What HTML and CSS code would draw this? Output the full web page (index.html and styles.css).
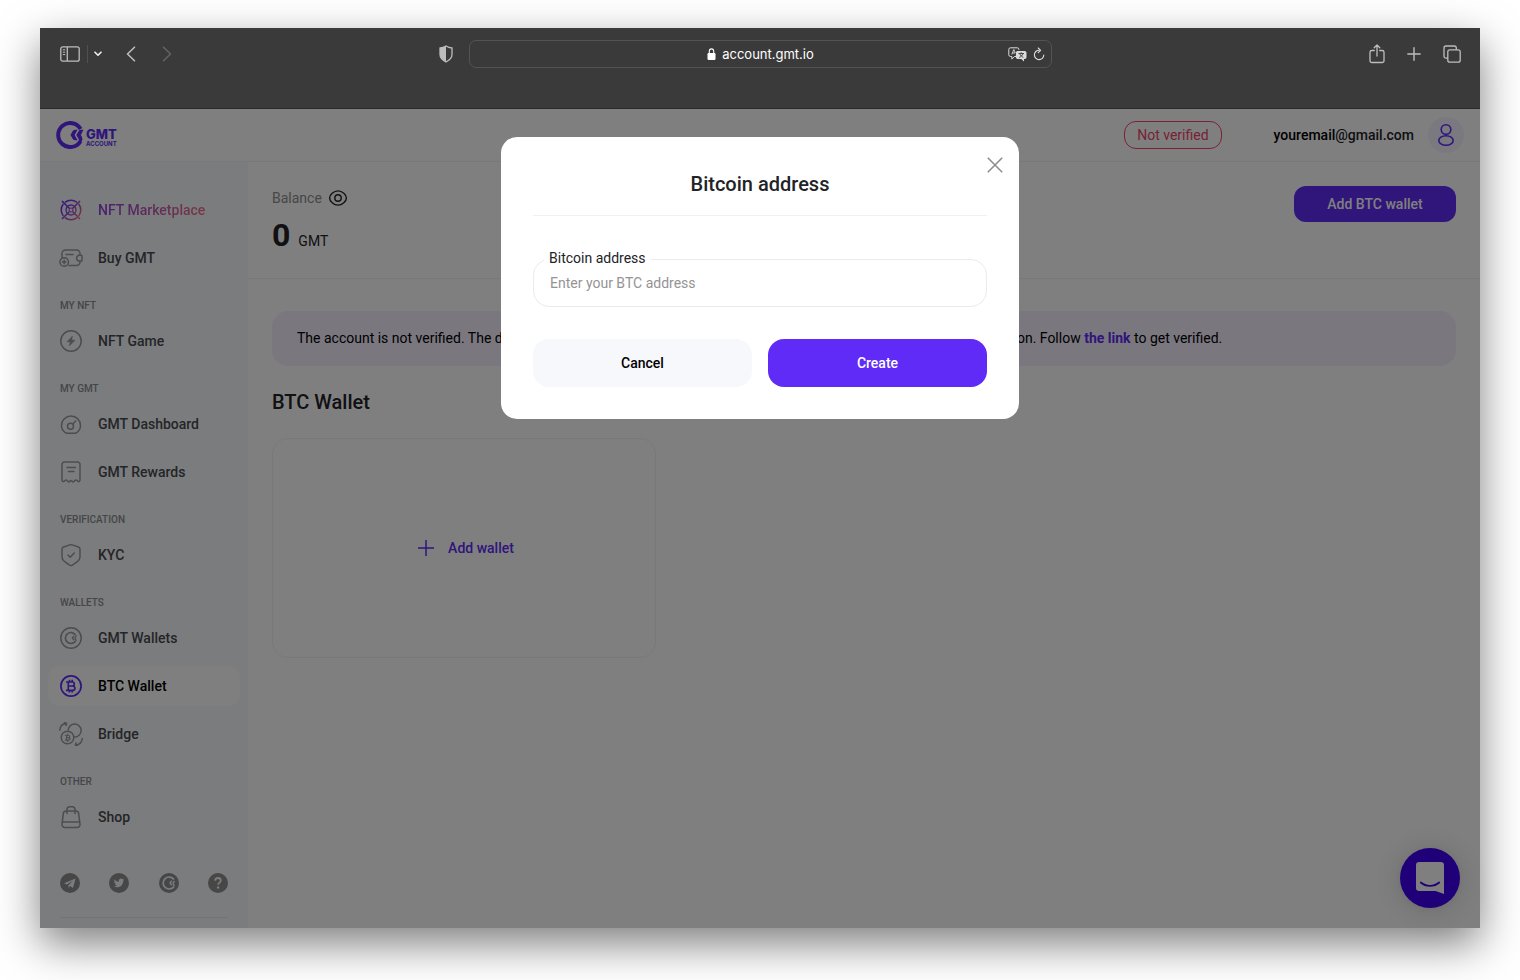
FILE: index.html
```html
<!DOCTYPE html>
<html lang="en">
<head>
  <meta charset="UTF-8" />
  <meta name="viewport" content="width=device-width, initial-scale=1.0"/>
  <title>GMT Account</title>
  <link rel="stylesheet" href="styles.css">
</head>
<body>
  <div class="window">
    <div class="toolbar">
      <div class="toolbar-left">
        <button type="button" aria-label="Sidebar">
          <svg width="20" height="16" viewBox="0 0 20 16" fill="none" stroke="currentColor" stroke-width="1.3"><rect x="0.8" y="0.8" width="18.4" height="14.4" rx="2"/><path d="M7.3 1v14"/><path d="M2.8 3.8h2.4M2.8 6.2h2.4M2.8 8.6h2.4" stroke-width="1"/></svg>
        </button>
        <span class="divider"></span>
        <button type="button" class="tab-menu" aria-label="Tab groups">
          <svg width="8" height="6" viewBox="0 0 8 6" fill="none" stroke="currentColor" stroke-width="1.6" stroke-linecap="round" stroke-linejoin="round"><path d="M1 1.2l3 3 3-3"/></svg>
        </button>
        <button type="button" class="back" aria-label="Back">
          <svg width="10" height="16" viewBox="0 0 10 16" fill="none" stroke="currentColor" stroke-width="1.6" stroke-linecap="round" stroke-linejoin="round"><path d="M8.5 1.2L1.5 8l7 6.8"/></svg>
        </button>
        <button type="button" class="forward" aria-label="Forward">
          <svg width="10" height="16" viewBox="0 0 10 16" fill="none" stroke="currentColor" stroke-width="1.6" stroke-linecap="round" stroke-linejoin="round"><path d="M1.5 1.2l7 6.8-7 6.8"/></svg>
        </button>
      </div>
      <div class="toolbar-center">
        <button type="button" aria-label="Privacy report">
          <svg width="14" height="18" viewBox="0 0 14 18"><path d="M7 1c2 1.300 4 1.900 6 2v6.500c0 3.300-2.600 5.700-6 7.500-3.400-1.800-6-4.200-6-7.500V3c2-.1 4-.7 6-2z" fill="none" stroke="currentColor" stroke-width="1.3"/><path d="M7 1v16C3.600 15.200 1 12.800 1 9.500V3c2-.1 4-.7 6-2z" fill="currentColor"/></svg>
        </button>
        <div class="address">
          <span class="address-text">
            <svg width="9" height="12" viewBox="0 0 9 12"><rect x="0.500" y="5" width="8" height="7" rx="1.200" fill="currentColor"/><path d="M2.300 5.500V3.300a2.200 2.400 0 0 1 4.400 0v2.200" fill="none" stroke="currentColor" stroke-width="1.100"/></svg>
            account.gmt.io
          </span>
          <span class="address-icons">
            <svg width="19" height="15" viewBox="0 0 19 15" fill="none" stroke="currentColor"><path d="M8 9.500H6.500L3.800 12V9.500H2.500A1.700 1.700 0 0 1 .8 7.800V2.500A1.700 1.700 0 0 1 2.500.8h6.700a1.700 1.700 0 0 1 1.700 1.700V3"/><path d="M3.800 7.500l2-5 1.500 3.500M4.500 6h2.500" stroke-width="0.900"/><path d="M9.700 4h7a1.800 1.800 0 0 1 1.800 1.800v4.400a1.800 1.800 0 0 1-1.800 1.800H16v2.500L13.300 12H9.700a1.800 1.800 0 0 1-1.800-1.800V5.800A1.800 1.800 0 0 1 9.700 4z" fill="currentColor" stroke="none"/><path d="M10.500 6.500h5.500M13.200 5.300v1.200M15 6.500c-.6 2-2 3.200-3.800 4M11.800 6.800c.7 1.700 2 3 3.600 3.600" stroke="#3a3a3a" stroke-width="0.900"/></svg>
            <svg width="12" height="14" viewBox="0 0 12 14" fill="none" stroke="currentColor" stroke-width="1.100" stroke-linecap="round" stroke-linejoin="round"><path d="M6.200 3.200A4.700 4.700 0 1 0 10.800 8"/><path d="M5.200 1l2.400 2.300-2.400 2.400"/></svg>
          </span>
        </div>
      </div>
      <div class="toolbar-right">
        <button type="button" aria-label="Share">
          <svg width="16" height="20" viewBox="0 0 16 20" fill="none" stroke="currentColor" stroke-width="1.300" stroke-linecap="round" stroke-linejoin="round"><path d="M5.300 6.500H2.800A1.800 1.800 0 0 0 1 8.300v8.400a1.800 1.800 0 0 0 1.800 1.800h10.400a1.800 1.800 0 0 0 1.800-1.800V8.300a1.800 1.800 0 0 0-1.800-1.800h-2.500M8 12V1.200M5.200 3.800L8 1l2.800 2.800"/></svg>
        </button>
        <button type="button" aria-label="New tab">
          <svg width="14" height="14" viewBox="0 0 14 14" fill="none" stroke="currentColor" stroke-width="1.400" stroke-linecap="round"><path d="M7 .8v12.400M.8 7h12.400"/></svg>
        </button>
        <button type="button" aria-label="All tabs">
          <svg width="18" height="18" viewBox="0 0 18 18" fill="none" stroke="currentColor" stroke-width="1.300"><rect x="4.800" y="4.800" width="12.400" height="12.400" rx="2"/><path d="M4.800 13.200H3a2 2 0 0 1-2-2V3a2 2 0 0 1 2-2h8.300a2 2 0 0 1 2 2v1.800"/></svg>
        </button>
      </div>
    </div>

    <div class="app">
      <header class="header">
        <a href="#" class="logo" aria-label="GMT Account">
          <svg width="28" height="28" viewBox="0 0 28 28" fill="none"><path d="M24.600 8A12 12 0 1 0 24.500 20.200" stroke="currentColor" stroke-width="4"/><path d="M19.300 8.800h2.300l-3 5.200 3 5.200h-2.300c-1.800 0-2.300-.8-3-2L14.500 14l1.800-3.200c.7-1.200 1.200-2 3-2z" fill="currentColor"/><path d="M24.300 8.800h3.200L24.800 14c1.500 2 2.200 4.200 1 6.500l-3.200 1.200c.8-1.600.5-3-.4-4.500L20.300 14l2-3.200c.7-1.200 1.200-2 2-2z" fill="currentColor"/></svg>
          <span class="logo-text"><b>GMT</b><small>ACCOUNT</small></span>
        </a>
        <div class="user">
          <span class="status">Not verified</span>
          <span class="email"><span class="email-name">youremail</span>@gmail.com</span>
          <button type="button" class="avatar" aria-label="Profile">
            <svg width="18" height="24" viewBox="0 0 18 24" fill="none" stroke="currentColor" stroke-width="1.600"><circle cx="9" cy="6.500" r="4.800"/><ellipse cx="9" cy="17.500" rx="7.200" ry="4.700"/></svg>
          </button>
        </div>
      </header>

      <div class="layout">
        <nav class="sidebar">
          <a href="#" class="nav-item marketplace">
            <svg width="24" height="24" viewBox="0 0 24 24" fill="none" stroke="url(#brand)" stroke-width="1.500"><defs><linearGradient id="brand" x1="2" y1="4" x2="22" y2="20" gradientUnits="userSpaceOnUse"><stop stop-color="#602bf7"/><stop offset="0.450" stop-color="#8b42dc"/><stop offset="1" stop-color="#f0718c"/></linearGradient></defs><path d="M6 4.300a9.800 9.800 0 0 1 12 0M19.700 6a9.800 9.800 0 0 1 0 12M18 19.700a9.800 9.800 0 0 1-12 0M4.300 18a9.800 9.800 0 0 1 0-12"/><circle cx="12" cy="12" r="5" stroke-width="1.300"/><circle cx="12" cy="12" r="2" stroke-width="1"/><path d="M3 3l7.500 7.500M13.500 13.500L21 21M21 3l-7.500 7.500M10.500 13.500L3 21"/></svg>
            <span>NFT Marketplace</span>
          </a>
          <a href="#" class="nav-item">
            <svg width="24" height="24" viewBox="0 0 24 24" fill="none" stroke="currentColor" stroke-width="1.500" stroke-linecap="round"><path d="M3 12V7.500A3.500 3.500 0 0 1 6.500 4h11A3.500 3.500 0 0 1 21 7.500v1.700M21 15v1a3.500 3.500 0 0 1-3.500 3.500H10"/><path d="M22.200 9.300H20a2.900 2.900 0 0 0 0 5.700h2.200a.8.800 0 0 0 .8-.8v-4a.8.800 0 0 0-.8-.9zM7 8.500h7"/><circle cx="5.200" cy="16" r="4.300"/><path d="M5.200 14.200v3.600M3.400 16H7"/></svg>
            <span>Buy GMT</span>
          </a>
          <h2 class="nav-title">MY NFT</h2>
          <a href="#" class="nav-item">
            <svg width="24" height="24" viewBox="0 0 24 24" fill="none" stroke="currentColor" stroke-width="1.500"><circle cx="12" cy="12" r="10.200"/><path d="M13.500 7L8 12.800l3.200.3-.9 4L16 11.300l-3.300-.4z" fill="currentColor" stroke-width="0.500"/></svg>
            <span>NFT Game</span>
          </a>
          <h2 class="nav-title">MY GMT</h2>
          <a href="#" class="nav-item">
            <svg width="24" height="24" viewBox="0 0 24 24" fill="none" stroke="currentColor" stroke-width="1.500" stroke-linecap="round"><path d="M7.200 21.200C4.300 19.600 2.500 16.800 2.500 13.500a9.500 9.500 0 0 1 19 0c0 3.300-1.800 6.100-4.700 7.700z" stroke-linejoin="round"/><circle cx="11.500" cy="14.200" r="3"/><path d="M13.700 12l3-3"/></svg>
            <span>GMT Dashboard</span>
          </a>
          <a href="#" class="nav-item">
            <svg width="24" height="24" viewBox="0 0 24 24" fill="none" stroke="currentColor" stroke-width="1.500" stroke-linecap="round" stroke-linejoin="round"><path d="M3 20V4.500A2.500 2.500 0 0 1 5.500 2h13A2.500 2.500 0 0 1 21 4.500V20c0 1.600-1.300 2-2.200 1.200l-1-.9c-.6-.5-1.200-.5-1.700 0l-1.300 1.300c-.4.500-1 .5-1.400 0l-.6-.6c-.5-.5-1.100-.5-1.600 0l-.6.6c-.4.500-1 .5-1.400 0L7.900 20.300c-.5-.5-1.100-.5-1.700 0l-1 .9C4.300 22 3 21.600 3 20z"/><path d="M8 7.500h8.500M9.500 11.500H15"/></svg>
            <span>GMT Rewards</span>
          </a>
          <h2 class="nav-title">VERIFICATION</h2>
          <a href="#" class="nav-item">
            <svg width="24" height="24" viewBox="0 0 24 24" fill="none" stroke="currentColor" stroke-width="1.500" stroke-linecap="round" stroke-linejoin="round"><path d="M10.800 1.900L4.600 4A2.300 2.300 0 0 0 3 6.200V14c0 1.800 1 3.200 2.300 4.300l5.300 3.800c.9.600 1.900.6 2.800 0l5.300-3.800C20 17.200 21 15.800 21 14V6.200A2.300 2.300 0 0 0 19.400 4l-6.200-2.100a3.700 3.700 0 0 0-2.400 0z"/><path d="M9 12l2.200 2.200 4-4.200"/></svg>
            <span>KYC</span>
          </a>
          <h2 class="nav-title">WALLETS</h2>
          <a href="#" class="nav-item">
            <svg width="24" height="24" viewBox="0 0 24 24" fill="none" stroke="currentColor" stroke-width="1.500"><circle cx="12" cy="12" r="10.200"/><path d="M16.500 9A5.500 5.500 0 1 0 16.500 15" stroke-width="1.700"/><path d="M15 9.800l-1.600 2.200 1.600 2.200M17.500 9.500L16 12l1.200 3" stroke-width="1.300"/></svg>
            <span>GMT Wallets</span>
          </a>
          <a href="#" class="nav-item active">
            <svg width="24" height="24" viewBox="0 0 24 24" fill="none" stroke="currentColor" stroke-width="1.700"><circle cx="12" cy="12" r="10.100"/><path d="M7 8h6.300a2 2 0 0 1 0 4H9.500h4.200a2.200 2.200 0 0 1 0 4.400H7M9.300 8v8.400M10.500 5.800V8M13.200 5.800V8M10.500 16.400v2.200M13.200 16.400v2.200"/></svg>
            <span>BTC Wallet</span>
          </a>
          <a href="#" class="nav-item">
            <svg width="24" height="24" viewBox="0 0 24 24" fill="none" stroke="currentColor" stroke-width="1.500" stroke-linecap="round" stroke-linejoin="round"><circle cx="8.500" cy="15.500" r="6.300"/><path d="M9.200 8A6.500 6.500 0 1 1 15.500 15M.8 8.200C1 4.500 3.500 1.700 7.500 1.200M5.500.8l2.200.4-.7 2.200M23.200 16.500c-.2 3.700-2.900 6.200-6.700 6.600M18.500 23.600l-2.200-.5.700-2.200"/><path d="M6.300 13.300h3.200a1.100 1.100 0 0 1 0 2.300H7.500h2.300a1.200 1.200 0 0 1 0 2.500H6.300M7.500 13.300v4.800M8.700 12v1.300M8.700 18.100v1.300" stroke-width="1.100"/></svg>
            <span>Bridge</span>
          </a>
          <h2 class="nav-title">OTHER</h2>
          <a href="#" class="nav-item">
            <svg width="24" height="24" viewBox="0 0 24 24" fill="none" stroke="currentColor" stroke-width="1.500" stroke-linecap="round"><path d="M7.300 6h9.400a3 3 0 0 1 3 2.600l1.300 10.700A2.900 2.900 0 0 1 18.100 22.500H5.900A2.900 2.900 0 0 1 3 19.300L4.300 8.600a3 3 0 0 1 3-2.600zM3.400 17h17.200"/><path d="M8 8.500V4.500A2.800 2.800 0 0 1 10.800 1.700h2.400A2.800 2.800 0 0 1 16 4.500v4"/></svg>
            <span>Shop</span>
          </a>
          <div class="socials">
            <a href="#" aria-label="Telegram"><svg width="20" height="20" viewBox="0 0 20 20"><circle cx="10" cy="10" r="10" fill="currentColor"/><path d="M15.500 5.500L4 10.200l3 1.200 6-4-4.500 4.800v2.600l1.700-1.800 2.800 2z" fill="#f7f8fb"/></svg></a>
            <a href="#" aria-label="Twitter"><svg width="20" height="20" viewBox="0 0 20 20"><circle cx="10" cy="10" r="10" fill="currentColor"/><path d="M5.200 6.200c1.200 1.400 2.900 2.300 4.700 2.400-.4-2 .9-3 2.100-3 .6 0 1.200.3 1.600.7.500-.1.900-.3 1.300-.5-.1.500-.5.900-.9 1.200.4 0 .8-.2 1.200-.3-.3.400-.6.800-1 1 .2 3.700-2.700 6.600-6 6.600-1.300 0-2.500-.4-3.400-1 1.200.1 2.300-.2 3.200-.9-1 0-1.700-.7-2-1.500h1c-1.100-.2-1.800-1-1.800-2.100.3.200.6.200 1 .2-1-.7-1.400-1.800-1-2.800z" fill="#f7f8fb"/></svg></a>
            <a href="#" aria-label="GMT"><svg width="20" height="20" viewBox="0 0 20 20"><circle cx="10" cy="10" r="10" fill="currentColor"/><path d="M15 6.500A6 6 0 1 0 15 13.500" fill="none" stroke="#f7f8fb" stroke-width="1.700"/><path d="M12.700 7.800L11 10l1.700 2.200M15.500 7.800L14 10l1.300 3.300" fill="none" stroke="#f7f8fb" stroke-width="1.400"/></svg></a>
            <a href="#" aria-label="Help"><svg width="20" height="20" viewBox="0 0 20 20"><circle cx="10" cy="10" r="10" fill="currentColor"/><path d="M7.200 7.700C7.200 6 8.400 5 10 5s2.800 1 2.800 2.500c0 2-2.700 2.200-2.700 4.300" fill="none" stroke="#f7f8fb" stroke-width="1.800"/><circle cx="10.100" cy="14.500" r="1.200" fill="#f7f8fb"/></svg></a>
          </div>
        </nav>

        <main class="main">
          <section class="balance">
            <div>
              <div class="balance-label">
                Balance
                <svg width="20" height="16" viewBox="0 0 20 16" fill="none" stroke="currentColor" stroke-width="1.400"><path d="M10 .9c4.300 0 8.400 4 8.400 7.100s-4.100 7.100-8.400 7.100S1.600 11.100 1.600 8 5.700.9 10 .9z"/><circle cx="10" cy="8" r="3.200"/></svg>
              </div>
              <div class="balance-value"><strong>0</strong><span>GMT</span></div>
            </div>
            <button type="button" class="add-button">Add BTC wallet</button>
          </section>

          <section class="content">
            <p class="alert">The account is not verified. The deposit and withdrawal of funds are limited until the account owner passes verification. Follow <a href="#">the link</a> to get verified.</p>
            <h1>BTC Wallet</h1>
            <button type="button" class="wallet-card">
              <svg width="16" height="16" viewBox="0 0 16 16" fill="none" stroke="currentColor" stroke-width="1.500"><path d="M8 0v16M0 8h16"/></svg>
              Add wallet
            </button>
          </section>
        </main>
      </div>

      <button type="button" class="chat" aria-label="Chat">
        <svg width="28" height="32" viewBox="0 0 28 32"><path d="M28 32s-4.700-1.800-8.400-3H3.200A3.200 3.200 0 0 1 0 25.800V3.200A3.200 3.200 0 0 1 3.200 0h21.600A3.200 3.200 0 0 1 28 3.200z" fill="#fff"/><path d="M4.800 20.500c5 4.400 13.400 4.400 18.400 0" fill="none" stroke="#4000f0" stroke-width="1.800" stroke-linecap="round"/></svg>
      </button>

      <div class="overlay">
        <form class="modal" role="dialog" aria-labelledby="modal-title">
          <button type="button" class="close" aria-label="Close">
            <svg width="16" height="16" viewBox="0 0 16 16" fill="none" stroke="currentColor" stroke-width="1.600"><path d="M.8.8l14.400 14.400M15.200.8L.8 15.200"/></svg>
          </button>
          <h2 id="modal-title">Bitcoin address</h2>
          <div class="field">
            <label for="address">Bitcoin address</label>
            <input type="text" id="address" placeholder="Enter your BTC address">
          </div>
          <div class="modal-buttons">
            <button type="button" class="cancel">Cancel</button>
            <button type="submit" class="create">Create</button>
          </div>
        </form>
      </div>
    </div>
  </div>
</body>
</html>
```
FILE: styles.css
```css
*, *::before, *::after {
  box-sizing: border-box;
}

body {
  margin: 0;
  min-height: 100vh;
  padding: 28px 40px 52px;
  display: flex;
  background-color: #ffffff;
  font-family: Roboto, "Liberation Sans", sans-serif;
  font-size: 14px;
  line-height: 20px;
  color: #222327;
}

button,
input {
  font-family: inherit;
  font-size: 14px;
}

button {
  padding: 0;
  border: none;
  background: none;
  color: inherit;
  cursor: pointer;
}

a {
  color: inherit;
  text-decoration: none;
}

svg {
  display: block;
  flex-shrink: 0;
}

h1, h2, p {
  margin: 0;
}

.window {
  flex: 1;
  display: flex;
  flex-direction: column;
  box-shadow: 0 16px 40px rgba(0, 0, 0, 0.5);
}

/* browser toolbar */
.toolbar {
  height: 81px;
  padding: 12px 19px 40px 20px;
  display: grid;
  grid-template-columns: 1fr auto 1fr;
  align-items: center;
  background-color: #3a3a3a;
  border-bottom: 1px solid #2a2a2a;
  color: #bdbdbd;
}

.toolbar-left,
.toolbar-right,
.toolbar-center {
  display: flex;
  align-items: center;
}

.divider {
  width: 1px;
  height: 18px;
  margin: 0 6px 0 7px;
  background-color: #505050;
}

.tab-menu {
  color: #f0f0f0;
}

.back {
  margin-left: 24px;
}

.forward {
  margin-left: 26px;
  color: #636363;
}

/* pulls the shield out so the address bar itself is centered */
.toolbar-center {
  gap: 16px;
  margin-left: -30px;
}

.address {
  width: 583px;
  height: 28px;
  padding: 0 6px;
  display: grid;
  grid-template-columns: 1fr auto 1fr;
  align-items: center;
  border: 1px solid #535353;
  border-radius: 7px;
}

.address-text {
  grid-column: 2;
  display: flex;
  align-items: center;
  gap: 6px;
  font-family: Inter, sans-serif;
  font-size: 13px;
  color: #ffffff;
}

.address-icons {
  display: flex;
  justify-content: flex-end;
  align-items: center;
  gap: 6px;
  color: #dcdcdc;
}

.toolbar-right {
  justify-content: flex-end;
  gap: 22px;
}

/* page */
.app {
  position: relative;
  flex: 1;
  display: flex;
  flex-direction: column;
  background-color: #ffffff;
}

.header {
  height: 53px;
  padding: 0 16px;
  display: flex;
  align-items: center;
  justify-content: space-between;
  border-bottom: 1px solid #f0f0f2;
}

.logo {
  display: flex;
  align-items: center;
  gap: 2px;
  color: #602bf7;
}

.logo-text {
  display: flex;
  flex-direction: column;
  padding-top: 6px;
  font-family: Inter, sans-serif;
}

.logo-text b {
  font-size: 13px;
  font-weight: 800;
  line-height: 11px;
}

.logo-text small {
  font-size: 6px;
  font-weight: 700;
  line-height: 7px;
}

.user {
  display: flex;
  align-items: center;
  font-weight: 500;
}

.status {
  margin-right: 52px;
  padding: 3px 12px;
  border: 1px solid #f0446a;
  border-radius: 12px;
  color: #f0446a;
  font-weight: 400;
}

.email {
  margin-right: 14px;
}

.email-name {
  color: #000000;
}

.avatar {
  width: 36px;
  height: 36px;
  display: flex;
  align-items: center;
  justify-content: center;
  border-radius: 50%;
  background-color: #f5f2fe;
  color: #602bf7;
}

.layout {
  flex: 1;
  display: flex;
}

.sidebar {
  width: 208px;
  padding: 28px 8px 10px;
  display: flex;
  flex-direction: column;
  gap: 8px;
  background-color: #f6f8fb;
}

.nav-item {
  height: 40px;
  padding: 0 11px;
  display: flex;
  align-items: center;
  gap: 15px;
  border-radius: 12px;
  font-weight: 500;
  color: #4a4b50;
}

.nav-item svg {
  color: #9a9a9c;
}

.marketplace span {
  background: linear-gradient(90deg, #8b42dc, #f0718c);
  background-clip: text;
  -webkit-background-clip: text;
  color: transparent;
}

.active {
  background-color: #ffffff;
  color: #000000;
}

.active svg {
  color: #602bf7;
}

.nav-title {
  padding: 12px 12px 0;
  font-size: 10px;
  line-height: 15px;
  font-weight: 500;
  color: #8c8c90;
}

.socials {
  margin: 28px 12px 0;
  padding-bottom: 24px;
  display: flex;
  justify-content: space-between;
  border-bottom: 1px solid #e8e8ec;
  color: #8e8e8e;
}

.main {
  flex: 1;
}

.balance {
  height: 117px;
  padding: 24px;
  display: flex;
  justify-content: space-between;
  align-items: flex-start;
  border-bottom: 1px solid #f0f0f2;
}

.balance-label {
  display: flex;
  align-items: center;
  gap: 6px;
  padding-top: 2px;
  color: #8e8e8e;
}

.balance-label svg {
  color: #222327;
}

.balance-value {
  display: flex;
  align-items: baseline;
  gap: 8px;
  padding-top: 8px;
  line-height: 38px;
}

.balance-value strong {
  font-size: 32px;
}

.add-button {
  width: 162px;
  height: 36px;
  border-radius: 12px;
  background-color: #602bf7;
  color: #ffffff;
  font-weight: 500;
}

.content {
  padding: 32px 24px;
}

.alert {
  padding: 17px 25px 18px;
  border-radius: 16px;
  background-color: #f4eefe;
  color: #000000;
}

.alert a {
  color: #602bf7;
  font-weight: 700;
}

h1,
.modal h2 {
  font-size: 20px;
  line-height: 24px;
  font-weight: 500;
}

h1 {
  margin: 24px 0;
}

.wallet-card {
  width: 384px;
  height: 220px;
  padding-left: 4px;
  display: flex;
  align-items: center;
  justify-content: center;
  gap: 14px;
  border: 1px solid #f3f3f5;
  border-radius: 16px;
  color: #602bf7;
  font-weight: 500;
}

.chat {
  position: absolute;
  right: 20px;
  bottom: 20px;
  width: 60px;
  height: 60px;
  display: flex;
  align-items: center;
  justify-content: center;
  border-radius: 50%;
  background-color: #4000f0;
  box-shadow: 0 1px 6px rgba(0, 0, 0, 0.06), 0 2px 32px rgba(0, 0, 0, 0.16);
}

/* dialog */
.overlay {
  position: absolute;
  inset: 0;
  padding-top: 28px;
  display: flex;
  justify-content: center;
  align-items: flex-start;
  background-color: rgba(0, 0, 0, 0.5);
}

.modal {
  position: relative;
  width: 518px;
  padding: 35px 32px 32px;
  border-radius: 16px;
  background-color: #ffffff;
}

.modal h2 {
  padding-bottom: 19px;
  border-bottom: 1px solid #f0f0f2;
  text-align: center;
}

.close {
  position: absolute;
  top: 20px;
  right: 16px;
  color: #8e8e8e;
}

.field {
  position: relative;
  margin: 43px 0 32px;
}

.field label {
  position: absolute;
  top: -11px;
  left: 11px;
  padding: 0 5px;
  background-color: #ffffff;
}

.field input {
  display: block;
  width: 100%;
  height: 48px;
  padding: 0 16px;
  border: 1px solid #ebebed;
  border-radius: 16px;
  outline: none;
  color: #222327;
}

.field input::placeholder {
  color: #949494;
}

.modal-buttons {
  display: flex;
  gap: 16px;
}

.modal-buttons button {
  flex: 1;
  height: 48px;
  border-radius: 16px;
  font-weight: 500;
}

.cancel {
  background-color: #f7f8fb;
  color: #000000;
}

.modal-buttons .create {
  background-color: #602bf7;
  color: #ffffff;
}
```
